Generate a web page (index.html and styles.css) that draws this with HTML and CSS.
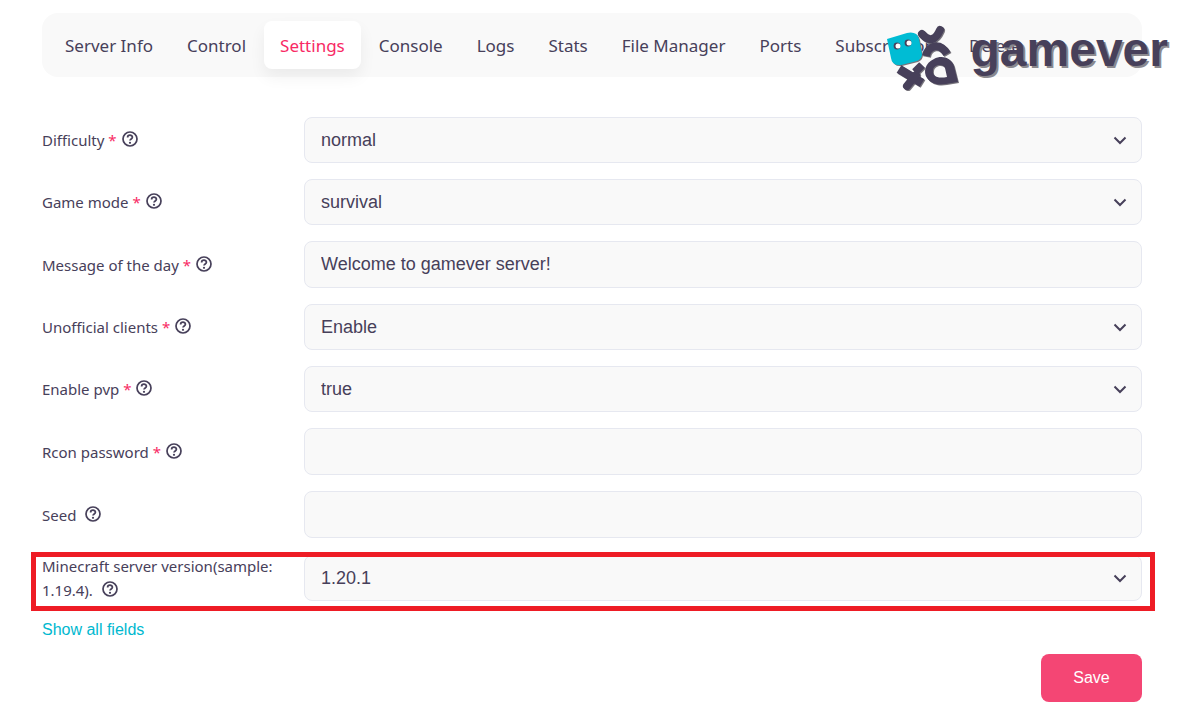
FILE: index.html
```html
<!DOCTYPE html>
<html lang="en">
<head>
<meta charset="utf-8">
<meta name="viewport" content="width=device-width, initial-scale=1">
<title>Server settings</title>
<link rel="stylesheet" href="styles.css">
</head>
<body>
<svg class="defs" aria-hidden="true">
  <symbol id="help" viewBox="0 0 16 16">
    <circle cx="8" cy="8" r="7" fill="none" stroke="currentColor" stroke-width="1.7"/>
    <path d="M5.6 6.5C5.6 3.4 10.4 3.5 10.4 6.2C10.4 7.9 8 7.9 8 9.6" fill="none" stroke="currentColor" stroke-width="1.8"/>
    <circle cx="8" cy="11.8" r="1.1" fill="currentColor"/>
  </symbol>
</svg>
<div class="page">
  <nav class="tabs">
    <a class="tab" href="#">Server Info</a>
    <a class="tab" href="#">Control</a>
    <a class="tab tab-active" href="#">Settings</a>
    <a class="tab" href="#">Console</a>
    <a class="tab" href="#">Logs</a>
    <a class="tab" href="#">Stats</a>
    <a class="tab" href="#">File Manager</a>
    <a class="tab" href="#">Ports</a>
    <a class="tab" href="#">Subscription</a>
    <a class="tab" href="#">Delete</a>
  </nav>
  <form class="fields">
    <div class="row">
      <label class="name" for="difficulty">Difficulty <span class="req">*</span> <svg class="help"><use href="#help"/></svg></label>
      <select class="control" id="difficulty"><option>normal</option></select>
    </div>
    <div class="row">
      <label class="name" for="mode">Game mode <span class="req">*</span> <svg class="help"><use href="#help"/></svg></label>
      <select class="control" id="mode"><option>survival</option></select>
    </div>
    <div class="row">
      <label class="name" for="motd">Message of the day <span class="req">*</span> <svg class="help"><use href="#help"/></svg></label>
      <input class="control control-text" id="motd" type="text" value="Welcome to gamever server!">
    </div>
    <div class="row">
      <label class="name" for="clients">Unofficial clients <span class="req">*</span> <svg class="help"><use href="#help"/></svg></label>
      <select class="control" id="clients"><option>Enable</option></select>
    </div>
    <div class="row">
      <label class="name" for="pvp">Enable pvp <span class="req">*</span> <svg class="help"><use href="#help"/></svg></label>
      <select class="control" id="pvp"><option>true</option></select>
    </div>
    <div class="row">
      <label class="name" for="rcon">Rcon password <span class="req">*</span> <svg class="help"><use href="#help"/></svg></label>
      <input class="control control-text" id="rcon" type="text">
    </div>
    <div class="row">
      <label class="name" for="seed">Seed&nbsp; <svg class="help"><use href="#help"/></svg></label>
      <input class="control control-text" id="seed" type="text">
    </div>
    <div class="row row-marked">
      <label class="name" for="version">Minecraft server version(sample: 1.19.4).&nbsp; <svg class="help"><use href="#help"/></svg></label>
      <select class="control" id="version"><option>1.20.1</option></select>
    </div>
    <a class="more" href="#">Show all fields</a>
    <button class="save" type="button">Save</button>
  </form>
  <div class="brand">
    <svg class="mark" viewBox="0 0 76 70" aria-hidden="true">
      <g fill="none" stroke="#47405a" stroke-width="8">
        <path d="M37 11Q48 23 55 7" stroke-linecap="round"/>
        <path d="M41 33C43 22 55 19 62 31"/>
        <path d="M14 46L37 60" stroke-width="9"/>
        <path d="M22 63L31 52" stroke-linecap="round"/>
        <path d="M30 49L37 42"/>
      </g>
      <path d="M73 59L69 43C66 34 56 32 49 36C40 40 38 49 42 55C47 62 55 62 61 61ZM62 54L60 45C57 40 49 42 48 47C47 53 52 56 62 54Z" fill="#47405a" fill-rule="evenodd"/>
      <path d="M2 16L22 10Q32 8 34 16L37 31Q37 36 32 38L16 42Q7 43 6 35Z" fill="#00bcd4"/>
      <g fill="#47405a"><circle cx="12" cy="23" r="3.4"/><circle cx="23" cy="20" r="3.4"/></g>
      <g fill="#fff"><circle cx="13" cy="23" r="2.5"/><circle cx="24" cy="20" r="2.5"/></g>
    </svg>
    <span class="wordmark">gamever</span>
  </div>
</div>
</body>
</html>
```
FILE: styles.css
```css
* { box-sizing: border-box; }
body { margin: 0; background: #fff; color: #47405a; font-family: "Noto Sans", sans-serif; }
.defs { display: none; }
.page { position: relative; padding: 13px 54px 19px 42px; }
.tabs { display: flex; gap: 2px; height: 64px; padding: 8px 7px; border-radius: 16px; background: #f9f9f9; }
.tab { display: flex; align-items: center; padding: 0 16px; border-radius: 8px; color: inherit; font-size: 17px; white-space: nowrap; text-decoration: none; }
.tab-active { background: #fff; color: #f82a64; box-shadow: 0 8px 16px rgba(0, 20, 20, 0.06); }
.fields { display: flex; flex-direction: column; gap: 16px; margin-top: 40px; }
.row { position: relative; display: grid; grid-template-columns: 246px 1fr; gap: 16px; align-items: center; }
.name { font-size: 15px; line-height: 24px; }
.req { color: #f82a64; }
.help { width: 16px; height: 16px; margin-left: 1px; vertical-align: -1px; }
.control { width: 100%; height: 46px; padding: 0 16px; border: 1px solid #e6e8f0; border-radius: 8px; background-color: #f9f9f9; color: inherit; font-family: "Liberation Sans", Arial, sans-serif; font-size: 18px; appearance: none; }
.control-text { height: 47px; }
select.control { background-image: url("data:image/svg+xml,%3Csvg xmlns='http://www.w3.org/2000/svg' width='14' height='10'%3E%3Cpath d='M1.5 2.5L7 8L12.500 2.5' fill='none' stroke='%2347405a' stroke-width='2'/%3E%3C/svg%3E"); background-repeat: no-repeat; background-position: right 14px center; }
.row-marked::after { content: ""; position: absolute; inset: -2px -13px -9px -11px; border: 5px solid #ee1c25; pointer-events: none; }
.more { align-self: flex-start; color: #00b8cf; font: 16px/24px "Liberation Sans", Arial, sans-serif; text-decoration: none; }
.save { align-self: flex-end; width: 101px; height: 48px; margin-top: -4px; border: 0; border-radius: 8px; background: #f44674; color: #fff; font: 16px "Liberation Sans", Arial, sans-serif; }
.brand { position: absolute; top: 23px; right: 28px; display: flex; align-items: flex-start; gap: 10px; }
.mark { width: 76px; height: 70px; filter: drop-shadow(1px 1px 0 #77747c); }
.wordmark { font: bold 48px/54px "Liberation Sans", Arial, sans-serif; text-shadow: 2px 2px 0 #8b898e; }
```
